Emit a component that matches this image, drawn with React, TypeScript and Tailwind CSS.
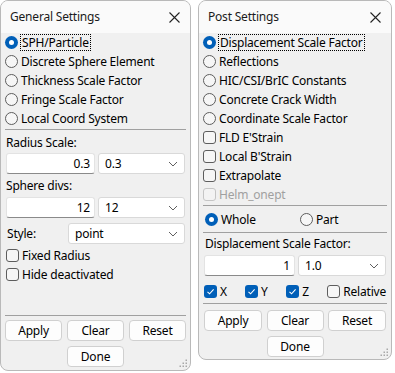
import React from "react";

const font = { fontFamily: '"Segoe UI", "Noto Sans", "Open Sans", sans-serif' };

function Radio({ checked, label, focus }: { checked?: boolean; label: string; focus?: boolean }) {
  return (
    <div className="flex h-[19px] items-center">
      <span
        className={
          checked
            ? "ml-[4px] flex size-[13px] items-center justify-center rounded-full bg-[#005fb8]"
            : "ml-[4px] size-[13px] rounded-full border border-[#5d5d5d] bg-[#f6f6f6]"
        }
      >
        {checked && <span className="size-[5px] rounded-full bg-white" />}
      </span>
      <span
        className={
          focus
            ? "ml-[2px] border border-dotted border-black px-[1px] leading-[15px]"
            : "ml-[3px] leading-[15px]"
        }
      >
        {label}
      </span>
    </div>
  );
}

function Check({ checked, label, disabled }: { checked?: boolean; label: string; disabled?: boolean }) {
  return (
    <div className="flex h-[19px] items-center">
      <span
        className={
          checked
            ? "flex size-[13px] items-center justify-center rounded-[3px] bg-[#005fb8]"
            : disabled
            ? "size-[13px] rounded-[3px] border border-[#c5c5c5] bg-[#f3f3f3]"
            : "size-[13px] rounded-[3px] border border-[#5d5d5d] bg-[#f6f6f6]"
        }
      >
        {checked && (
          <svg width="9" height="9" viewBox="0 0 9 9">
            <path d="M1.5 4.8 L3.6 6.8 L7.6 2.4" fill="none" stroke="white" strokeWidth="1.1" />
          </svg>
        )}
      </span>
      <span className={disabled ? "ml-[3px] text-[#a0a0a0]" : "ml-[3px]"}>{label}</span>
    </div>
  );
}

function Chevron() {
  return (
    <svg width="10" height="6" viewBox="0 0 10 6" className="mr-[6px]">
      <path d="M1 1 L5 5 L9 1" fill="none" stroke="#5f5f5f" strokeWidth="1" />
    </svg>
  );
}

function TextBox({ value, w }: { value: string; w: string }) {
  return (
    <div
      className={`${w} flex h-[21px] items-center justify-end rounded-[3px] border border-[#e3e3e3] border-b-[#8a8a8a] bg-white pr-[4px]`}
    >
      {value}
    </div>
  );
}

function Select({ value, w }: { value: string; w: string }) {
  return (
    <div
      className={`${w} flex h-[21px] items-center justify-between rounded-[3px] border border-[#d9d9d9] bg-white pl-[6px]`}
    >
      <span>{value}</span>
      <Chevron />
    </div>
  );
}

function Btn({ label, w }: { label: string; w: string }) {
  return (
    <div
      className={`${w} flex h-[21px] items-center justify-center rounded-[4px] border border-[#d0d0d0] bg-[#fdfdfd]`}
    >
      {label}
    </div>
  );
}

function Sep() {
  return <div className="mx-[4px] h-px bg-[#a0a0a0]" />;
}

function Grip() {
  return (
    <svg width="8" height="8" viewBox="0 0 8 8" className="absolute bottom-[3px] right-[3px]">
      {[
        [6, 1],
        [6, 4],
        [3, 4],
        [6, 7],
        [3, 7],
        [0, 7],
      ].map(([x, y], i) => (
        <rect key={i} x={x + 0.5} y={y - 0.5} width="1.5" height="1.5" fill="#a8a8a8" />
      ))}
    </svg>
  );
}

function Panel({ title, children, w }: { title: string; children: React.ReactNode; w: string }) {
  return (
    <div className={`${w} relative flex flex-col overflow-hidden rounded-[8px] border border-[#b9b9b9] bg-[#f0f0f0]`}>
      <div className="flex h-[32px] items-center justify-between bg-[#fafafa] pl-[9px] pr-[10px]">
        <span className="text-[12px] text-[#1a1a1a]">{title}</span>
        <svg width="11" height="11" viewBox="0 0 11 11">
          <path d="M0.5 0.5 L10.5 10.5 M10.5 0.5 L0.5 10.5" stroke="#222" strokeWidth="1.1" />
        </svg>
      </div>
      {children}
      <Grip />
    </div>
  );
}

export default function App() {
  return (
    <div
      className="flex h-[373px] w-[395px] items-start gap-[7px] bg-white text-[12px] tracking-[-0.2px] text-black"
      style={font}
    >
      <Panel title="General Settings" w="w-[191px] h-[371px]">
        <div className="flex flex-col">
          <Radio checked focus label="SPH/Particle" />
          <Radio label="Discrete Sphere Element" />
          <Radio label="Thickness Scale Factor" />
          <Radio label="Fringe Scale Factor" />
          <Radio label="Local Coord System" />
        </div>
        <div className="mt-[1px]">
          <Sep />
        </div>
        <div className="flex flex-col px-[5px]">
          <div className="mt-[4px] flex h-[18px] items-center">Radius Scale:</div>
          <div className="mt-[1px] flex gap-[3px]">
            <TextBox value="0.3" w="w-[90px]" />
            <Select value="0.3" w="w-[88px]" />
          </div>
          <div className="mt-[3px] flex h-[18px] items-center">Sphere divs:</div>
          <div className="mt-[2px] flex gap-[3px]">
            <TextBox value="12" w="w-[90px]" />
            <Select value="12" w="w-[88px]" />
          </div>
          <div className="mt-[5px] flex items-center">
            <span className="w-[62px] pl-[1px]">Style:</span>
            <Select value="point" w="w-[117px]" />
          </div>
          <div className="mt-[2px]">
            <Check label="Fixed Radius" />
            <Check label="Hide deactivated" />
          </div>
        </div>
        <div className="flex-1" />
        <Sep />
        <div className="flex flex-col gap-[5px] px-[4px] pb-[3px] pt-[4px]">
          <div className="flex justify-between">
            <Btn label="Apply" w="w-[57px]" />
            <Btn label="Clear" w="w-[57px]" />
            <Btn label="Reset" w="w-[57px]" />
          </div>
          <div className="flex justify-center">
            <Btn label="Done" w="w-[57px]" />
          </div>
        </div>
      </Panel>
      <Panel title="Post Settings" w="w-[194px] h-[360px]">
        <div className="flex flex-col">
          <Radio checked focus label="Displacement Scale Factor" />
          <Radio label="Reflections" />
          <Radio label="HIC/CSI/BrIC Constants" />
          <Radio label="Concrete Crack Width" />
          <Radio label="Coordinate Scale Factor" />
          <div className="pl-[4px]">
            <Check label="FLD E'Strain" />
            <Check label="Local B'Strain" />
            <Check label="Extrapolate" />
            <Check disabled label="Helm_onept" />
          </div>
        </div>
        <div className="mt-[1px]">
          <Sep />
        </div>
        <div className="flex h-[26px] items-center pl-[2px]">
          <div className="w-[95px]">
            <Radio checked label="Whole" />
          </div>
          <Radio label="Part" />
        </div>
        <Sep />
        <div className="flex flex-col px-[5px]">
          <div className="mt-[2px] flex h-[18px] items-center pl-[1px]">Displacement Scale Factor:</div>
          <div className="mt-[2px] flex gap-[3px]">
            <TextBox value="1" w="w-[92px]" />
            <Select value="1.0" w="w-[89px]" />
          </div>
          <div className="mt-[6px] flex h-[19px] items-center">
            <div className="w-[42px]">
              <Check checked label="X" />
            </div>
            <div className="w-[42px]">
              <Check checked label="Y" />
            </div>
            <div className="w-[42px]">
              <Check checked label="Z" />
            </div>
            <Check label="Relative" />
          </div>
        </div>
        <div className="mt-[2px]">
          <Sep />
        </div>
        <div className="flex flex-col gap-[5px] px-[5px] pt-[6px]">
          <div className="flex justify-between">
            <Btn label="Apply" w="w-[58px]" />
            <Btn label="Clear" w="w-[57px]" />
            <Btn label="Reset" w="w-[58px]" />
          </div>
          <div className="flex justify-center">
            <Btn label="Done" w="w-[57px]" />
          </div>
        </div>
      </Panel>
    </div>
  );
}
